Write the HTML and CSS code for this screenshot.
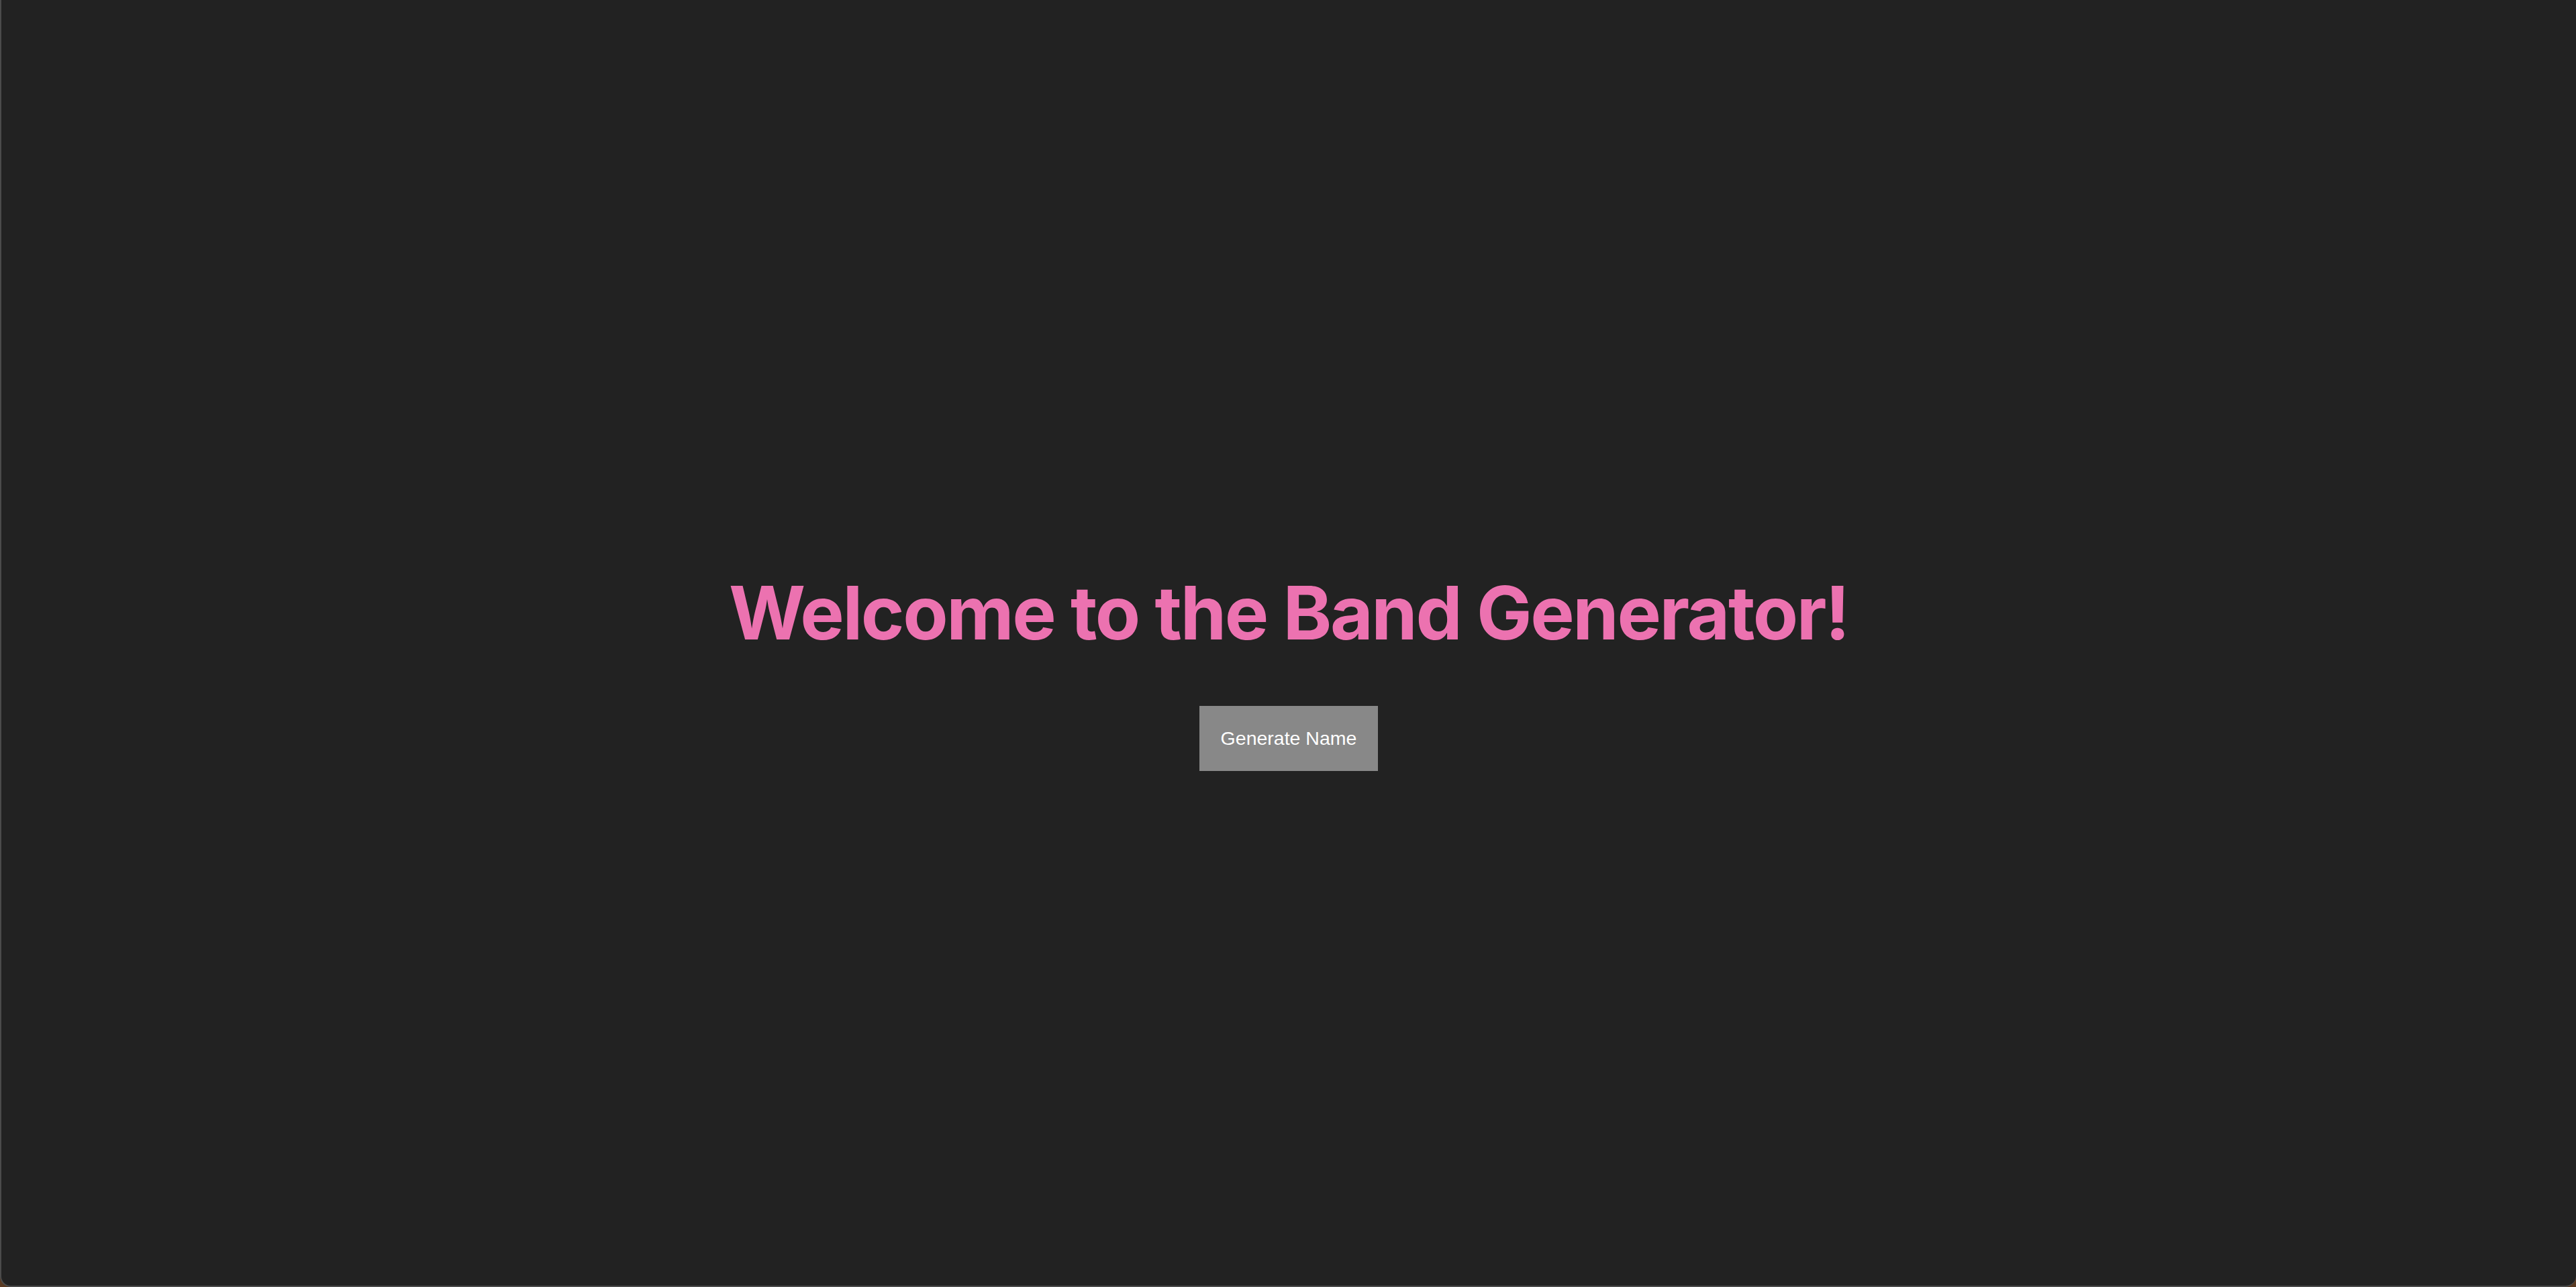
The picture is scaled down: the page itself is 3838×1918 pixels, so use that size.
FILE: index.html
```html
<!DOCTYPE html>
<html lang="en">
<head>
<meta charset="utf-8">
<title>Band Generator</title>
<link rel="stylesheet" href="styles.css">
</head>
<body>
<div class="window">
  <main class="app">
    <h1 class="title">Welcome to the Band Generator!</h1>
    <button class="generate-btn" type="button">Generate Name</button>
  </main>
</div>
</body>
</html>
```
FILE: styles.css
```css
html, body {
  margin: 0;
  padding: 0;
  height: 100%;
  background: #5a3a22;
}

.window {
  box-sizing: border-box;
  height: 100vh;
  background: #222222;
  border-left: 2px solid #4b4b4b;
  border-bottom: 2px solid #4b4b4b;
  border-radius: 0 0 16px 16px;
  overflow: hidden;
}

.app {
  box-sizing: border-box;
  height: 100%;
  padding-top: 80px;
  display: flex;
  flex-direction: column;
  align-items: center;
  justify-content: center;
  gap: 73px;
}

.title {
  margin: 0;
  font-family: Inter, "Liberation Sans", sans-serif;
  font-weight: 700;
  font-size: 110px;
  line-height: 132px;
  letter-spacing: -2.4px;
  color: #ec72b0;
  white-space: nowrap;
}

.generate-btn {
  border: none;
  border-radius: 0;
  background: #888888;
  color: #ffffff;
  font-family: "Liberation Sans", Arial, sans-serif;
  font-size: 28.5px;
  line-height: 33px;
  padding: 32px 32px;
  cursor: pointer;
}
```
